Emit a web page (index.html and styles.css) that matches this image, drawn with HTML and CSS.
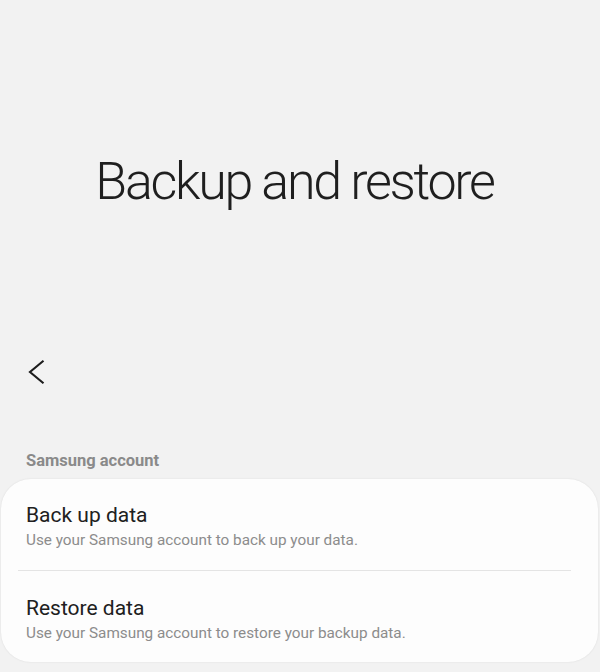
FILE: index.html
```html
<!DOCTYPE html>
<html lang="en">
<head>
<meta charset="utf-8">
<title>Backup and restore</title>
<link rel="stylesheet" href="styles.css">
</head>
<body>
<div class="screen">
  <header class="hero">
    <h1 class="hero-title">Backup and restore</h1>
  </header>
  <nav class="toolbar">
    <button class="back" aria-label="Back">
      <svg width="24" height="24" viewBox="0 0 24 24" aria-hidden="true">
        <path d="M19.5 0.8 L6 12 L19.5 23.2" fill="none" stroke="#1c1c1c" stroke-width="2.1" stroke-linejoin="miter"/>
      </svg>
    </button>
  </nav>
  <section class="group">
    <h2 class="group-label">Samsung account</h2>
    <div class="card">
      <div class="item first">
        <div class="item-title">Back up data</div>
        <div class="item-sub">Use your Samsung account to back up your data.</div>
      </div>
      <div class="divider"></div>
      <div class="item second">
        <div class="item-title">Restore data</div>
        <div class="item-sub">Use your Samsung account to restore your backup data.</div>
      </div>
    </div>
  </section>
</div>
</body>
</html>
```

FILE: styles.css
```css
html, body {
  margin: 0;
  padding: 0;
  background: #f2f2f2;
}
body {
  font-family: Roboto, "Liberation Sans", sans-serif;
  width: 600px;
  height: 672px;
  overflow: hidden;
}
.screen {
  display: flex;
  flex-direction: column;
}
.hero {
  padding-top: 150px;
  padding-right: 11px;
  display: flex;
  justify-content: center;
}
.hero-title {
  margin: 0;
  font-weight: 300;
  font-size: 52px;
  line-height: 64px;
  color: #1f1f1f;
  letter-spacing: -2.3px;
}
.toolbar {
  margin-top: 146px;
  padding-left: 24px;
  display: flex;
  align-items: center;
  height: 24px;
}
.back {
  border: 0;
  background: none;
  padding: 0;
  width: 24px;
  height: 24px;
  display: block;
}
.back svg {
  display: block;
}
.group {
  margin-top: 67px;
}
.group-label {
  margin: 0 0 8px 26px;
  font-size: 16.5px;
  line-height: 20px;
  font-weight: 700;
  color: #8a8a8a;
}
.card {
  margin: 0 2px 0 1px;
  background: #fdfdfd;
  border-radius: 30px;
  box-shadow: 0 0 2px rgba(0, 0, 0, 0.10);
}
.item {
  padding: 0 25px;
  display: flex;
  flex-direction: column;
  gap: 2px;
}
.item.first {
  padding-top: 23px;
  padding-bottom: 20px;
}
.item.second {
  padding-top: 24px;
  padding-bottom: 19px;
}
.item-title {
  font-size: 21px;
  line-height: 26px;
  color: #202020;
}
.item-sub {
  font-size: 15.3px;
  line-height: 20px;
  color: #8c8c8c;
}
.divider {
  height: 1px;
  margin: 0 27px 0 17px;
  background: #e4e4e4;
}
```
